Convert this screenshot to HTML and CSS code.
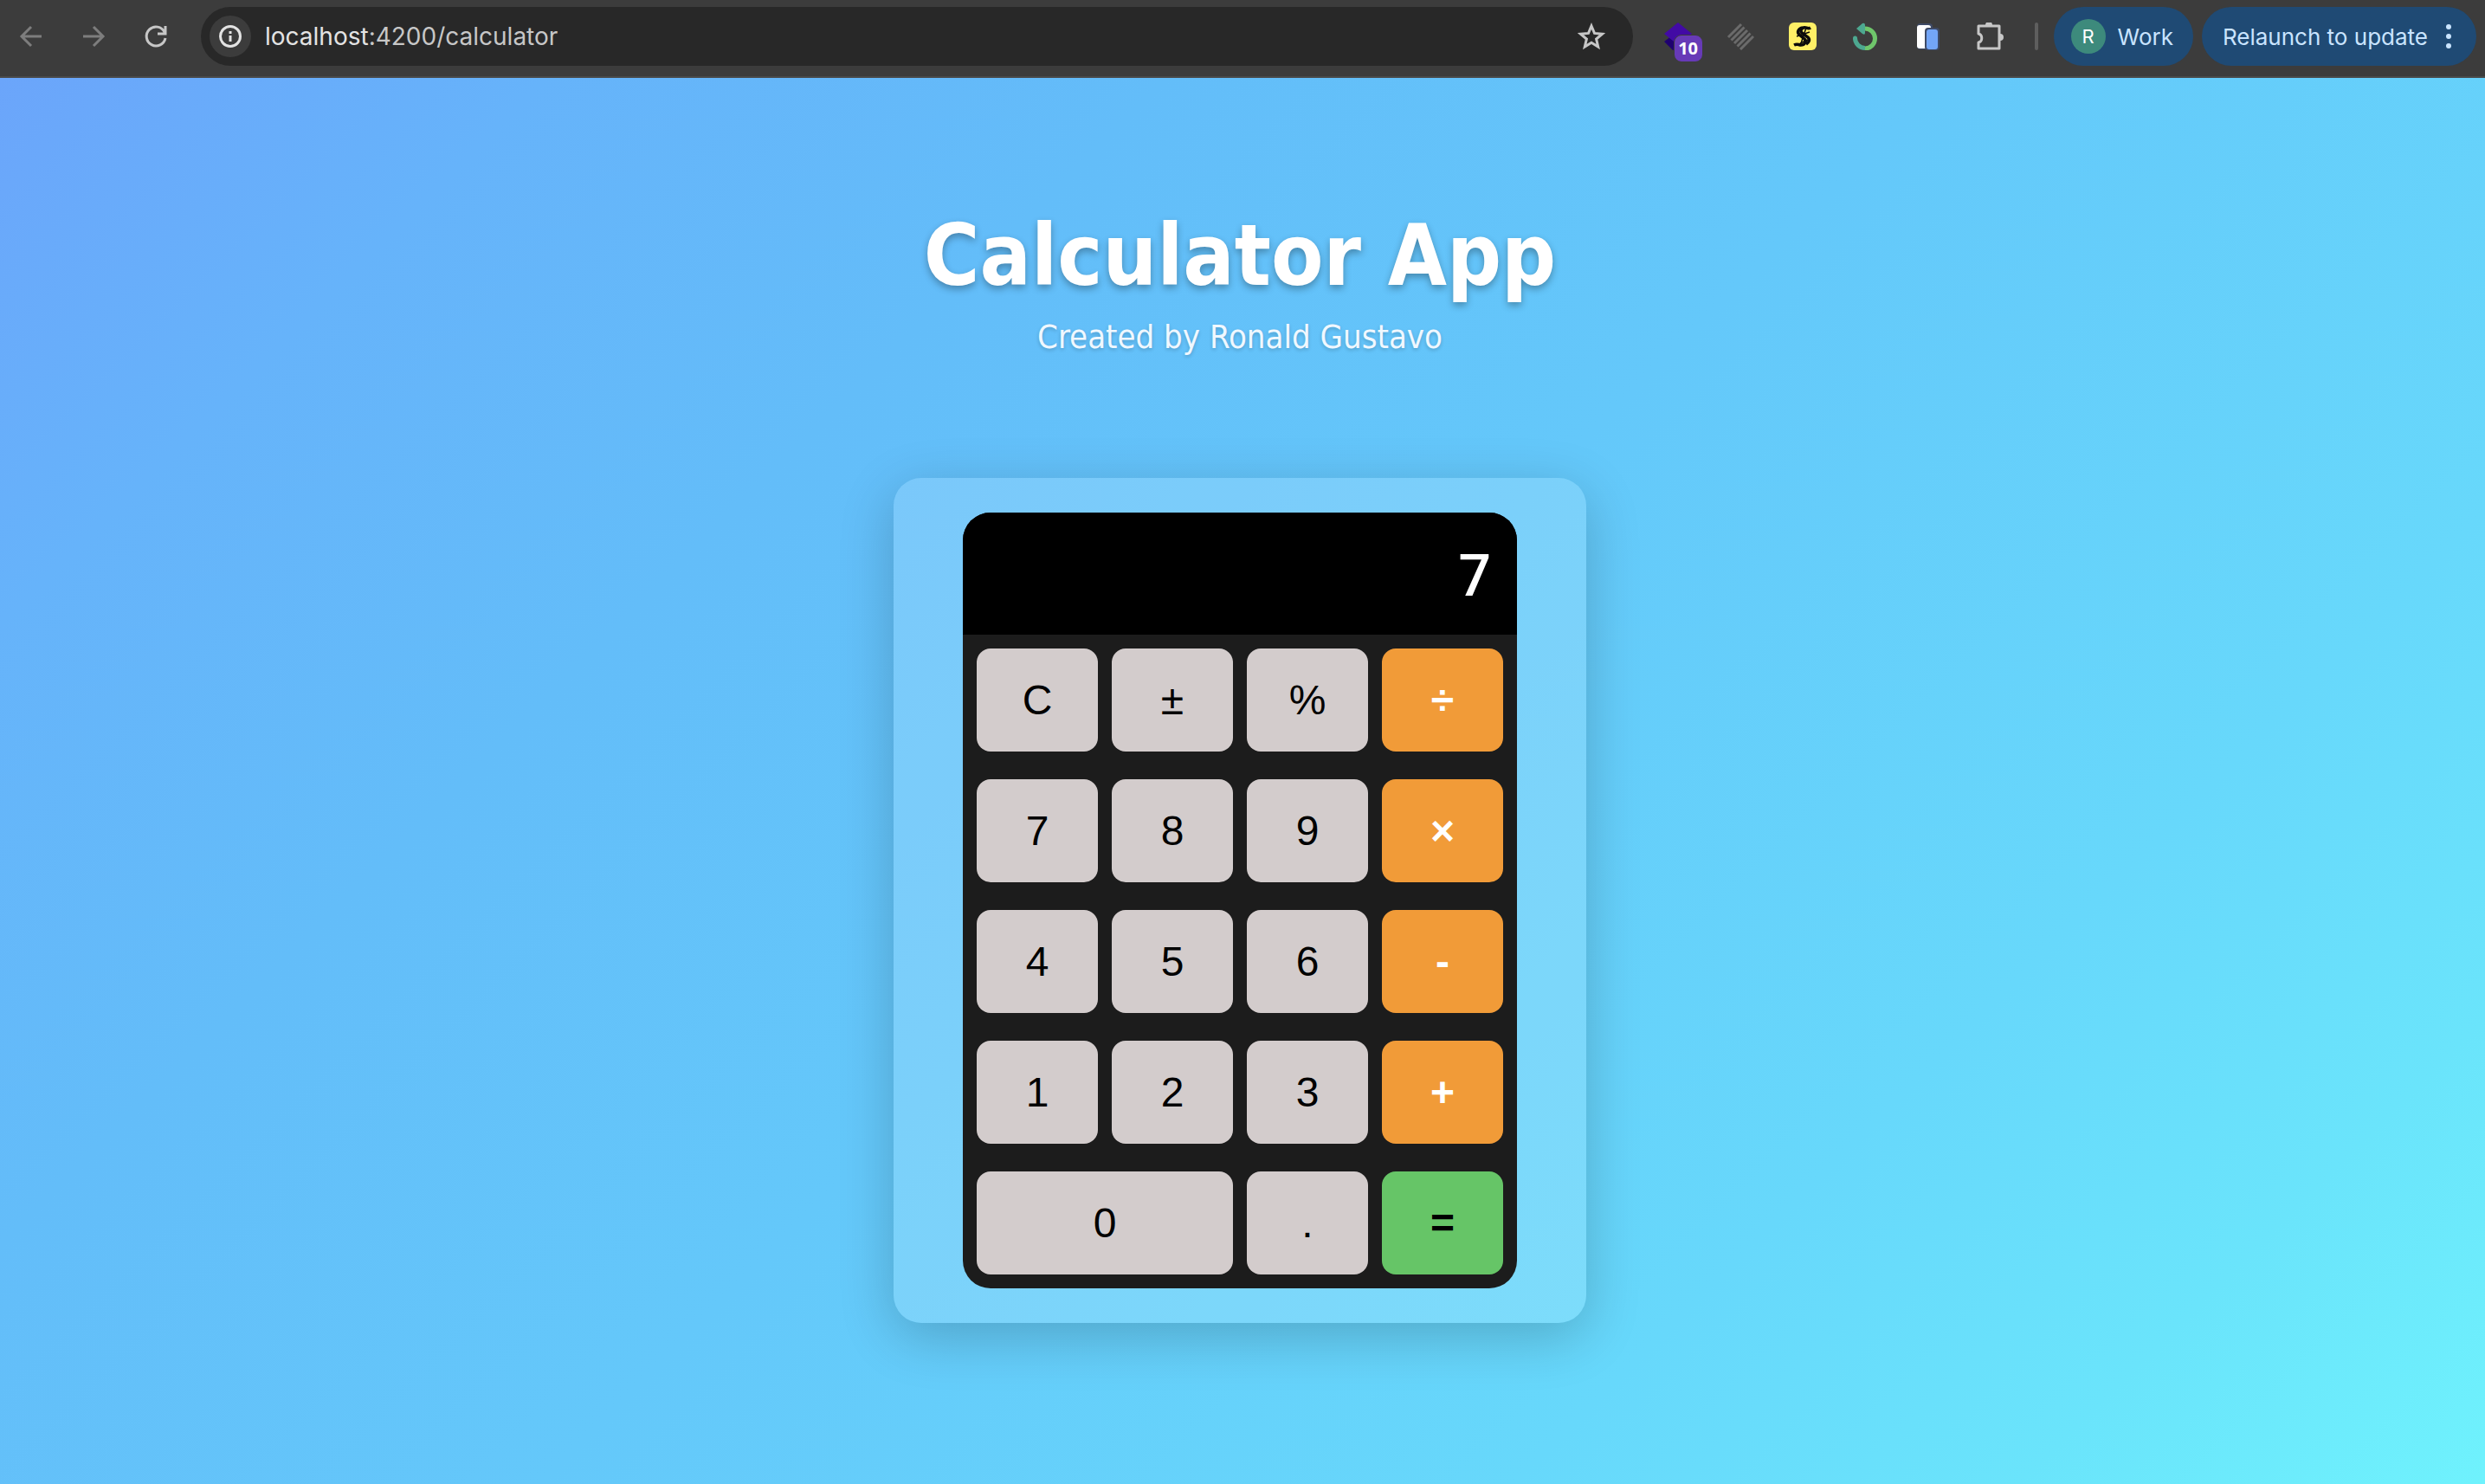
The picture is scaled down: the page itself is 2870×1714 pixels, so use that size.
FILE: index.html
```html
<!DOCTYPE html>
<html lang="en">
<head>
<meta charset="utf-8">
<title>Calculator App</title>
<link rel="stylesheet" href="styles.css">
</head>
<body>
<header class="toolbar">
  <nav class="nav" aria-label="Browser navigation">
    <button class="icon-btn dim" aria-label="Back"><svg viewBox="0 0 28 28"><path d="M26 14H4M14 3L3 14l11 11"/></svg></button>
    <button class="icon-btn dim" aria-label="Forward"><svg viewBox="0 0 28 28"><path d="M2 14h22M14 3l11 11-11 11"/></svg></button>
    <button class="icon-btn" aria-label="Reload"><svg viewBox="0 0 28 28"><path d="M24 9A11 11 0 1 0 25 16M25 2v9h-9"/></svg></button>
  </nav>
  <div class="address">
    <button class="site-info" aria-label="Site information"><svg viewBox="0 0 28 28"><circle cx="14" cy="14" r="11.5"/><path d="M14 13v7M14 8v3"/></svg></button>
    <a class="url" href="#">localhost<span class="path">:4200/calculator</span></a>
    <button class="star" aria-label="Bookmark"><svg viewBox="0 0 32 32"><path d="M16 4l3.5 8.400 9 .8-6.900 5.900 2.100 8.900L16 23.300 8.300 28l2.100-8.900L3.500 13.200l9-.8z"/></svg></button>
  </div>
  <div class="extensions">
    <button class="ext" aria-label="Layers, 10"><svg viewBox="0 0 32 32"><path fill="#1f0070" d="M0 22l8-6 8 6v10h-6z"/><path fill="#420aa5" d="M16 0l16 13-16 13L0 13z"/></svg><span class="count">10</span></button>
    <button class="ext" aria-label="Stripes"><svg viewBox="0 0 32 32"><path stroke="#6b6b6b" stroke-width="3" fill="none" d="M2 17L17 2M5.500 20.500L20.500 5.500M9 24L24 9M12.500 27.500L27.500 12.500M16 31L31 16"/></svg></button>
    <button class="ext" aria-label="Scribe"><span class="scribe"><svg viewBox="0 0 32 32"><g fill="none" stroke="#0b0b0b"><path stroke-width="3.500" d="M25 6c-3 2-5-1-8 0s-4 4-2 6l7 5c3 3 1 6-2 8M20 7"/><path stroke-width="3.500" d="M16 6c-5 1-7 5-4 8l6 5c3 3 0 7-4 7-3 0-4-2-8 0"/><path stroke-width="1.500" d="M20 6l-7 21M24 11L9 16M22 20l-9 4"/></g></svg></span></button>
    <button class="ext" aria-label="Refresh ring"><svg viewBox="0 0 32 32"><g fill="none" stroke-width="5"><path stroke="#6fc66b" d="M16 7a11.500 11.500 0 0 1 0 23"/><path stroke="#4da890" d="M16 29.500A11.500 11.500 0 0 1 4.500 18"/></g><circle cx="4.500" cy="18" r="2.500" fill="#4da890"/><path fill="#4da890" d="M6 7l7-6q3-1 3 2v9q0 3-3 1z"/></svg></button>
    <button class="ext" aria-label="Pages"><svg viewBox="0 0 32 32"><rect x="4" y="1" width="18" height="30" rx="4" fill="#3e4a66"/><rect x="4" y="3" width="16" height="27" rx="3" fill="#fff"/><rect x="13" y="6" width="17" height="26" rx="4" fill="#3e4a66"/><rect x="15" y="8" width="13" height="23" rx="3" fill="#73a5f7"/></svg></button>
    <button class="ext" aria-label="Extensions"><svg viewBox="0 0 32 32"><path fill="none" stroke="#c7c7c7" stroke-width="3" stroke-linejoin="round" d="M3 4h24v26H3v-7c5-1 5-9 0-10z"/><path fill="#c7c7c7" d="M11 3a4 4 0 0 1 8 0zM28 13a4 4 0 0 1 0 8z"/></svg></button>
  </div>
  <span class="divider"></span>
  <button class="pill"><span class="avatar">R</span>Work</button>
  <button class="pill update">Relaunch to update<svg viewBox="0 0 8 32"><circle cx="4" cy="5" r="3"/><circle cx="4" cy="16" r="3"/><circle cx="4" cy="27" r="3"/></svg></button>
</header>
<main class="page">
  <h1 class="title">Calculator App</h1>
  <p class="subtitle">Created by Ronald Gustavo</p>
  <section class="panel">
    <div class="calculator">
      <output class="display">7</output>
      <div class="keys">
        <button class="key">C</button><button class="key">±</button><button class="key">%</button><button class="key op">÷</button>
        <button class="key">7</button><button class="key">8</button><button class="key">9</button><button class="key op">×</button>
        <button class="key">4</button><button class="key">5</button><button class="key">6</button><button class="key op">-</button>
        <button class="key">1</button><button class="key">2</button><button class="key">3</button><button class="key op">+</button>
        <button class="key wide">0</button><button class="key">.</button><button class="key equals">=</button>
      </div>
    </div>
  </section>
</main>
</body>
</html>
```
FILE: styles.css
```css
* { box-sizing: border-box; }
html, body { height: 100%; }
body {
  margin: 0;
  display: flex;
  flex-direction: column;
  font-family: "Liberation Sans", Arial, sans-serif;
}
button { border: 0; padding: 0; background: none; color: inherit; font: inherit; cursor: pointer; }

.toolbar {
  display: flex;
  align-items: center;
  height: 90px;
  padding: 0 10px 4px 22px;
  background: #3c3c3c;
  border-bottom: 2px solid #4a4a4a;
  font-family: Inter, sans-serif;
  font-size: 26px;
}
.nav { display: flex; gap: 44px; margin-right: 38px; }
.icon-btn { width: 28px; height: 28px; color: #c7c7c7; }
.dim { color: #7d7d7d; }
.icon-btn svg, .site-info svg, .star svg { display: block; fill: none; stroke: currentColor; stroke-width: 3; }
.address {
  flex: 1;
  display: flex;
  align-items: center;
  height: 68px;
  padding: 0 32px 0 10px;
  border-radius: 34px;
  background: #282828;
}
.site-info {
  width: 48px;
  height: 48px;
  padding: 10px;
  border-radius: 50%;
  background: #3c3c3c;
  color: #e3e3e3;
}
.url { flex: 1; margin-left: 16px; color: #e3e3e3; font-size: 28px; text-decoration: none; }
.path { color: #c7c7c7; }
.star { width: 32px; height: 32px; color: #c7c7c7; }
.extensions { display: flex; gap: 40px; margin: 0 36px; }
.ext { position: relative; width: 32px; height: 32px; }
.ext svg { display: block; }
.count {
  position: absolute;
  left: 11px;
  top: 14px;
  width: 34px;
  height: 32px;
  border: 1px solid #3c3c3c;
  border-radius: 9px;
  background: #673ab7;
  color: #fff;
  font: bold 20px/30px "Open Sans", sans-serif;
}
.scribe { display: block; height: 32px; border-radius: 6px; background: #fff066; }
.divider { width: 4px; height: 32px; border-radius: 2px; background: #5e5e5e; }
.pill {
  display: flex;
  align-items: center;
  gap: 14px;
  height: 68px;
  margin-left: 18px;
  padding: 0 23px 0 20px;
  border-radius: 34px;
  background: #1f4a74;
  color: #c9e4ff;
}
.update { margin-left: 10px; padding: 0 28px 0 24px; gap: 20px; }
.update svg { width: 8px; height: 32px; fill: currentColor; }
.avatar {
  width: 40px;
  border-radius: 50%;
  background: #3d8a7c;
  color: #fff;
  font-size: 22px;
  line-height: 40px;
}

.page {
  flex: 1;
  display: flex;
  flex-direction: column;
  align-items: center;
  padding: 146px 6px 0 0;
  background: linear-gradient(135deg, #6ba5fa, #66b3fa 14%, #63bdf9 30%, #64c8fa 50%, #67d8fb 75%, #6ae4fb 88%, #6ff2fd);
}
.title, .subtitle { margin: 0; font-family: "DejaVu Sans Condensed", "DejaVu Sans", sans-serif; }
.title {
  color: #fff;
  font-size: 98px;
  line-height: 118px;
  text-shadow: 0 4px 8px rgba(0, 0, 0, 0.3);
}
.subtitle {
  margin-top: 12px;
  color: #f0f8ff;
  font-size: 38px;
  line-height: 46px;
  text-shadow: 0 2px 4px rgba(0, 0, 0, 0.2);
}
.panel {
  width: 800px;
  margin-top: 140px;
  padding: 40px 80px;
  border-radius: 32px;
  background: rgba(255, 255, 255, 0.15);
  box-shadow: 0 16px 64px rgba(0, 0, 0, 0.2);
}
.calculator { overflow: hidden; border-radius: 32px; background: #1c1c1c; }
.display {
  display: block;
  height: 141px;
  padding: 0 30px;
  background: #000;
  color: #fff;
  font: 500 66px/148px Roboto, sans-serif;
  text-align: right;
}
.keys {
  display: grid;
  grid-template-columns: repeat(4, 1fr);
  gap: 32px 16px;
  padding: 16px;
}
.key {
  height: 119px;
  border-radius: 16px;
  background: #d3cccc;
  color: #000;
  font-size: 48px;
}
.op, .equals { font-weight: bold; }
.op { background: #f19b38; color: #fff; }
.equals { background: #66c567; }
.wide { grid-column: span 2; }
```
